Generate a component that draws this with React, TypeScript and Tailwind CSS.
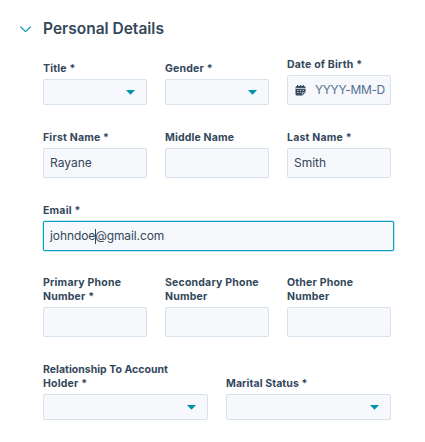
import type { ReactNode } from "react";

type FieldProps = {
  label: ReactNode;
  children: ReactNode;
};

function Field({ label, children }: FieldProps) {
  return (
    <div className="flex min-w-0 flex-col">
      <div className="mb-1 text-[10.5px] leading-[13.3px] font-bold tracking-[0.2px] whitespace-nowrap">{label}</div>
      {children}
    </div>
  );
}

function TextBox({ children }: { children?: ReactNode }) {
  return (
    <div className="flex h-[30px] items-center overflow-hidden rounded-[2px] border border-[#d8e2ec] bg-[#f6f8fb] px-1.5 text-[12px] whitespace-nowrap">
      {children}
    </div>
  );
}

function SelectBox() {
  return (
    <div className="flex h-[26px] items-center justify-end rounded-[2px] border border-[#d8e2ec] bg-[#f6f8fb] pr-[11.5px]">
      <svg className="h-[5px] w-[9px]" viewBox="0 0 9 5">
        <path d="M0 0H9L5 4.3Q4.5 4.8 4 4.3Z" fill="#0091ae" />
      </svg>
    </div>
  );
}

function CalendarIcon() {
  return (
    <svg className="mr-[9px] ml-px h-[11px] w-[11px] shrink-0" viewBox="0 0 11 11">
      <path
        d="M2 1V.5a.6.6 0 0 1 1.2 0V1h1.7V.5a.6.6 0 0 1 1.2 0V1h1.7V.5a.6.6 0 0 1 1.2 0V1Q10.5 1 10.5 2.5V7.5L7.5 10.5H2Q.5 10.5 .5 9V2.5Q.5 1 2 1Z"
        fill="#33475b"
      />
      <path d="M.5 3.4h10M2.2 5.4h1.4M4.8 5.4h1.4M7.4 5.4h1.4M2.2 7.7h1.4M4.8 7.7h1.4" stroke="#f6f8fb" strokeWidth=".8" />
      <path d="M7.5 10.2V7.6H10.2" fill="none" stroke="#f6f8fb" strokeWidth=".6" />
    </svg>
  );
}

export default function App() {
  return (
    <main className="h-[442px] w-[425px] overflow-hidden bg-white pt-[19px] pl-[43px] font-['Inter',sans-serif] text-[#33475b]">
      <header className="-ml-[23px] flex h-5 items-center">
        <svg className="mr-[12px] h-[7px] w-[11px]" viewBox="0 0 11 7">
          <path d="M.7 1L5.5 5.6L10.3 1" fill="none" stroke="#0091ae" strokeWidth="1.1" strokeLinecap="round" strokeLinejoin="round" />
        </svg>
        <h1 className="text-[15.5px] leading-5 font-semibold whitespace-nowrap">Personal Details</h1>
      </header>

      <div className="flex w-[348.5px] flex-col">
        <div className="grid h-[66px] grid-cols-[104px_104px_104px] items-end gap-[18px]">
          <Field label="Title *"><SelectBox /></Field>
          <Field label="Gender *"><SelectBox /></Field>
          <Field label="Date of Birth *">
            <TextBox>
              <CalendarIcon />
              <span className="tracking-[-0.35px] text-[#516f90]">YYYY-MM-D</span>
            </TextBox>
          </Field>
        </div>
        <div className="grid h-[73px] grid-cols-[104px_104px_104px] items-end gap-[18px]">
          <Field label="First Name *"><TextBox>Rayane</TextBox></Field>
          <Field label={<span className="tracking-[0.15px]">Middle Name</span>}><TextBox /></Field>
          <Field label="Last Name *"><TextBox>Smith</TextBox></Field>
        </div>
        <div className="flex h-[73px] w-[351px] flex-col justify-end">
          <Field label="Email *">
            <div className="flex h-[30px] items-center rounded-[2px] border border-[#0fa0bb] bg-[#f6f8fb] px-1.5 text-[12px] tracking-[-0.1px] shadow-[0_0_0_0.5px_#7fd1de]">
              <span>johndoe</span>
              <span className="-mr-px h-[15px] w-px bg-[#33475b]" />
              <span>@gmail.com</span>
            </div>
          </Field>
        </div>
        <div className="grid h-[86px] grid-cols-[104px_104px_104px] items-end gap-[18px]">
          <Field label={<>Primary Phone<br />Number *</>}><TextBox /></Field>
          <Field label={<>Secondary Phone<br />Number</>}><TextBox /></Field>
          <Field label={<>Other Phone<br />Number</>}><TextBox /></Field>
        </div>
        <div className="grid h-[83px] grid-cols-[165px_165px] items-end gap-[18px]">
          <Field label={<><span className="tracking-[0.02px]">Relationship To Account</span><br />Holder *</>}><SelectBox /></Field>
          <Field label={<span className="tracking-[0.1px]">Marital Status *</span>}><SelectBox /></Field>
        </div>
      </div>
    </main>
  );
}
